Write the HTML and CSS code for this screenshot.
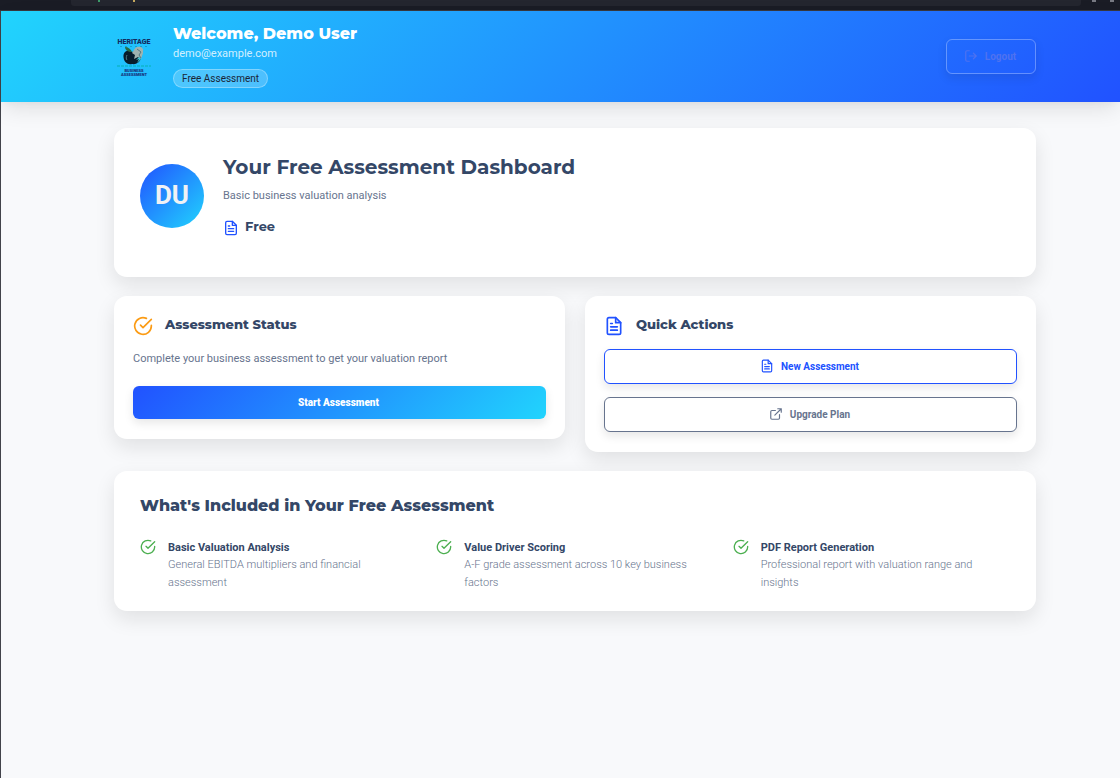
FILE: index.html
```html
<!DOCTYPE html>
<html lang="en">
<head>
<meta charset="utf-8">
<meta name="viewport" content="width=device-width, initial-scale=1">
<title>Free Assessment Dashboard</title>
<link rel="stylesheet" href="styles.css">
</head>
<body>
<svg class="sprite" aria-hidden="true">
  <symbol id="file" viewBox="0 0 24 24"><path d="M14 2H6a2 2 0 0 0-2 2v16a2 2 0 0 0 2 2h12a2 2 0 0 0 2-2V8z"/><path d="M14 2v6h6M16 13H8M16 17H8M10 9H8"/></symbol>
  <symbol id="check" viewBox="0 0 24 24"><path d="M22 11.08V12a10 10 0 1 1-5.93-9.14"/><path d="M22 4 12 14.01l-3-3"/></symbol>
  <symbol id="external" viewBox="0 0 24 24"><path d="M18 13v6a2 2 0 0 1-2 2H5a2 2 0 0 1-2-2V8a2 2 0 0 1 2-2h6M15 3h6v6M10 14 21 3"/></symbol>
  <symbol id="logout" viewBox="0 0 24 24"><path d="M9 21H5a2 2 0 0 1-2-2V5a2 2 0 0 1 2-2h4M16 17l5-5-5-5M21 12H9"/></symbol>
</svg>
<div class="browser-edge" aria-hidden="true">
  <div class="address-bar"><i class="tick green"></i><i class="tick amber"></i></div>
  <i class="dot"></i><i class="dot"></i>
</div>
<div class="page">
  <header class="header">
    <svg class="logo" viewBox="0 0 40 40" role="img" aria-label="Heritage Business Assessment">
      <text class="logo-name" x="20" y="7" text-anchor="middle">HERITAGE</text>
      <path d="M6 9.500h29" stroke="#179fc9" stroke-width="1" stroke-dasharray="2 3"/>
      <path d="M18 15c-5-3-9 0-8.500 5 .4 5 4 8 8.500 7 5 1 9-3 9-7 0-5-4-7-9-5z" fill="#071d2b"/>
      <path d="M18 15c-1-3-4-5-7-5 0 3 3 5 7 5z" fill="#286b43"/>
      <path d="M20 13c1-3 4-4 7-3l2 2 0 4-2 6-3-2-4 2 1-4-3-2z" fill="#9fb3af"/>
      <path d="M23 12l4 3-2 3 2 3M13 18c-1 2-1 4 0 5" fill="none" stroke="#527982"/>
      <path d="M25 20l-3 3 3-1-2 4 4-4" fill="#42c8d2"/>
      <path d="M3 29h34" stroke="#12b8d8" stroke-width="2" stroke-dasharray="3 1"/>
      <text class="logo-sub" x="20" y="35" text-anchor="middle">BUSINESS</text>
      <text class="logo-sub" x="20" y="39" text-anchor="middle">ASSESSMENT</text>
    </svg>
    <div class="identity">
      <h1>Welcome, Demo User</h1>
      <p>demo@example.com</p>
      <span class="chip">Free Assessment</span>
    </div>
    <button class="button logout" type="button"><svg class="icon"><use href="#logout"/></svg>Logout</button>
  </header>
  <main class="content">
    <section class="card hero">
      <div class="avatar">DU</div>
      <div class="summary">
        <h2>Your Free Assessment Dashboard</h2>
        <p>Basic business valuation analysis</p>
        <div class="plan"><svg class="icon medium"><use href="#file"/></svg><strong>Free</strong></div>
      </div>
    </section>
    <div class="panels">
      <section class="card panel">
        <div class="panel-title"><svg class="icon large orange"><use href="#check"/></svg><h3>Assessment Status</h3></div>
        <p>Complete your business assessment to get your valuation report</p>
        <button class="button start" type="button">Start Assessment</button>
      </section>
      <section class="card panel">
        <div class="panel-title"><svg class="icon large blue"><use href="#file"/></svg><h3>Quick Actions</h3></div>
        <div class="actions">
          <button class="button outline primary" type="button"><svg class="icon"><use href="#file"/></svg>New Assessment</button>
          <button class="button outline" type="button"><svg class="icon"><use href="#external"/></svg>Upgrade Plan</button>
        </div>
      </section>
    </div>
    <section class="card included">
      <h2>What's Included in Your Free Assessment</h2>
      <ul class="features">
        <li><svg class="icon medium green"><use href="#check"/></svg><div><h4>Basic Valuation Analysis</h4><p>General EBITDA multipliers and financial assessment</p></div></li>
        <li><svg class="icon medium green"><use href="#check"/></svg><div><h4>Value Driver Scoring</h4><p>A-F grade assessment across 10 key business factors</p></div></li>
        <li><svg class="icon medium green"><use href="#check"/></svg><div><h4>PDF Report Generation</h4><p>Professional report with valuation range and insights</p></div></li>
      </ul>
    </section>
  </main>
</div>
</body>
</html>
```
FILE: styles.css
```css
* { box-sizing: border-box; }
body {
  display: flex;
  flex-direction: column;
  min-height: 100vh;
  margin: 0;
  background: #f8f9fb;
  color: #344767;
  font-family: Roboto, "Liberation Sans", sans-serif;
  font-size: 11px;
}
h1, h2, h3, h4, p, ul { margin: 0; padding: 0; }
h1, h2, h3, .plan strong { font-family: Montserrat, Inter, sans-serif; font-weight: 800; }
.sprite { display: none; }

.browser-edge {
  display: flex;
  gap: 14px;
  height: 11px;
  padding: 0 6px 0 71px;
  background: #1a1c25;
  border-bottom: 1px solid #37373d;
}
.address-bar { flex: 1; display: flex; gap: 33px; height: 6px; margin-right: -3px; padding-left: 27px; background: #24262f; border-radius: 0 0 3px 3px; }
.tick { width: 2px; height: 2px; }
.tick.green { background: #3c9a69; }
.tick.amber { background: #c4a85e; }
.dot { width: 4px; height: 2px; background: #777982; }

.page { flex: 1; border-left: 1px solid #42434a; }
.header {
  display: flex;
  align-items: center;
  height: 91px;
  padding: 0 84px 0 113px;
  background: linear-gradient(135deg, #21d4fd 0%, #2152ff 100%);
  box-shadow: 0 8px 22px -3px rgba(20, 20, 20, .12), 0 5px 8px -5px rgba(20, 20, 20, .05);
}
.logo { width: 40px; height: 40px; margin-right: 19px; }
.logo-name { font: 900 7px Roboto, sans-serif; fill: #122c60; }
.logo-sub { font: 900 4px Roboto, sans-serif; fill: #17307a; }
.identity { flex: 1; padding-bottom: 2px; }
.identity h1 { color: #fff; font-size: 16px; line-height: 22px; }
.identity p { color: rgba(255, 255, 255, .8); line-height: 18px; margin-bottom: 6px; }
.chip {
  display: block;
  width: fit-content;
  padding: 0 8px;
  border: 1px solid rgba(255, 255, 255, .3);
  border-radius: 10px;
  background: rgba(255, 255, 255, .2);
  color: #1a2536;
  font-size: 10px;
  line-height: 17px;
}

.icon { flex: none; width: 14px; height: 14px; fill: none; stroke: currentColor; stroke-width: 2; stroke-linecap: round; stroke-linejoin: round; }
.icon.medium { width: 16px; height: 16px; }
.icon.large { width: 20px; height: 20px; }
.orange { color: #fb9b14; }
.blue { color: #2152ff; }
.green { color: #4caf50; }

.button {
  display: flex;
  align-items: center;
  justify-content: center;
  gap: 7px;
  width: 100%;
  height: 35px;
  padding: 0 18px 1px 16px;
  border-radius: 6px;
  font: 700 10px Roboto, sans-serif;
  box-shadow: 0 4px 10px rgba(20, 20, 20, .1);
}
.logout { width: 90px; border: 1px solid rgba(255, 255, 255, .3); background: transparent; color: #4f72f0; }
.start { height: 33px; border: 0; color: #fff; background: linear-gradient(135deg, #2152ff, #21d4fd); font-weight: 900; }
.outline { border: 1px solid currentColor; background: #fff; color: #67748e; }
.primary { color: #2152ff; }

.content { display: flex; flex-direction: column; gap: 19px; padding: 26px 84px 26px 113px; }
.card { background: #fff; border-radius: 13px; box-shadow: 0 8px 20px rgba(20, 20, 20, .1); }
.hero { display: flex; gap: 19px; padding: 26px; }
.avatar {
  display: grid;
  place-items: center;
  align-self: flex-start;
  width: 64px;
  height: 64px;
  margin-top: 10px;
  padding-bottom: 2px;
  border-radius: 50%;
  background: linear-gradient(135deg, #2152ff, #21d4fd);
  color: #f0f2f5;
  font-size: 26px;
  font-weight: 700;
}
.summary { padding-bottom: 13px; }
.summary h2 { font-size: 20px; line-height: 26px; font-weight: 700; }
.summary p { margin: 7px 0 12px; line-height: 18px; color: #67748e; }
.plan { display: flex; align-items: center; gap: 6px; color: #2152ff; }
.plan strong { color: #344767; font-size: 13px; line-height: 19px; padding-bottom: 2px; font-weight: 700; }

.panels { display: grid; grid-template-columns: 1fr 1fr; align-items: start; gap: 20px; }
.panel { padding: 19px 19px 20px; }
.panel-title { display: flex; align-items: center; gap: 12px; height: 21px; }
.panel h3 { font-size: 13px; line-height: 19px; padding-bottom: 2px; }
.panel p { margin: 14px 0 18px; line-height: 18px; color: #67748e; }
.actions { display: grid; gap: 13px; margin-top: 13px; }

.included { padding: 24px 26px 19px; }
.included h2 { font-size: 16px; line-height: 22px; }
.features { display: grid; grid-template-columns: repeat(3, 1fr); gap: 19px; margin-top: 22px; list-style: none; }
.features li { display: flex; gap: 12px; }
.features h4 { font-size: 11px; line-height: 17px; font-weight: 700; }
.features p { line-height: 18px; font-weight: 300; color: #67748e; }
```
